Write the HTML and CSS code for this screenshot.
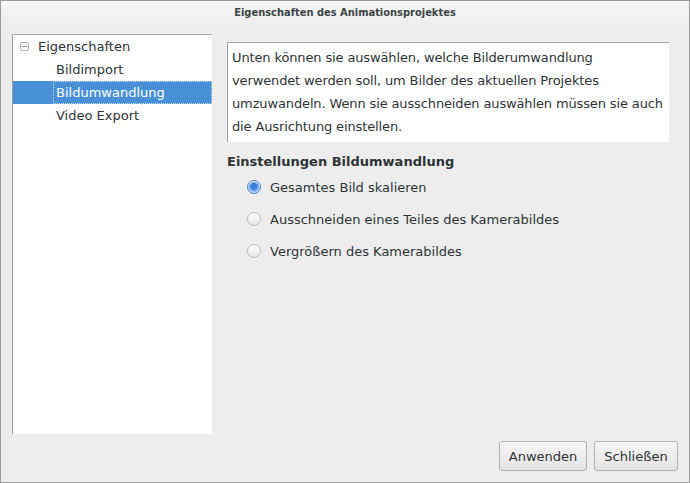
FILE: index.html
```html
<!DOCTYPE html>
<html>
<head>
<meta charset="utf-8">
<link rel="stylesheet" href="styles.css">
</head>
<body>
<div class="window">
  <div class="titlebar">Eigenschaften des Animationsprojektes</div>
  <div class="content">
    <div class="tree">
      <div class="row parent"><span class="expander"></span><span class="label">Eigenschaften</span></div>
      <div class="row child"><span class="label">Bildimport</span></div>
      <div class="row child selected"><span class="label focus">Bildumwandlung</span></div>
      <div class="row child"><span class="label">Video Export</span></div>
    </div>
    <div class="panel">
      <div class="info">Unten können sie auswählen, welche Bilderumwandlung<br>verwendet werden soll, um Bilder des aktuellen Projektes<br>umzuwandeln. Wenn sie ausschneiden auswählen müssen sie auch<br>die Ausrichtung einstellen.</div>
      <div class="heading">Einstellungen Bildumwandlung</div>
      <div class="options">
        <div class="option"><span class="radio checked"></span><span>Gesamtes Bild skalieren</span></div>
        <div class="option"><span class="radio"></span><span>Ausschneiden eines Teiles des Kamerabildes</span></div>
        <div class="option"><span class="radio"></span><span>Vergrößern des Kamerabildes</span></div>
      </div>
    </div>
  </div>
  <div class="footer">
    <button class="btn">Anwenden</button>
    <button class="btn">Schließen</button>
  </div>
</div>
</body>
</html>
```
FILE: styles.css
```css
html, body {
  margin: 0;
  padding: 0;
  background: #ededed;
}
.window {
  width: 690px;
  height: 483px;
  box-sizing: border-box;
  border: 1px solid #9c9c9c;
  display: flex;
  flex-direction: column;
  background: #ededed;
  font-family: "DejaVu Sans", sans-serif;
  font-size: 13px;
  color: #2e3436;
}
.titlebar {
  height: 24px;
  line-height: 23px;
  text-align: center;
  font-family: "DejaVu Sans Condensed", "DejaVu Sans", sans-serif;
  font-weight: bold;
  font-size: 11px;
  color: #3c4446;
  background: linear-gradient(#f7f7f7, #ededed);
}
.content {
  flex: 1;
  display: flex;
  padding: 9px 20px 0 11px;
  min-height: 0;
}
.tree {
  width: 199px;
  flex-shrink: 0;
  height: 399px;
  background: #fff;
  border-top: 1px solid #a8a8a8;
  border-left: 1px solid #9a9a9a;
  display: flex;
  flex-direction: column;
}
.row {
  height: 23px;
  display: flex;
  align-items: center;
}
.row.parent {
  padding-left: 7px;
}
.expander {
  width: 7px;
  height: 7px;
  border: 1px solid #b0b0b0;
  border-radius: 2px;
  position: relative;
  margin-right: 6px;
}
.expander::after {
  content: "";
  position: absolute;
  left: 1px;
  right: 1px;
  top: 3px;
  height: 1px;
  background: #8a8a8a;
}
.row.child {
  padding-left: 40px;
}
.row .label {
  flex: 1;
  height: 100%;
  display: flex;
  align-items: center;
  padding-left: 3px;
  box-sizing: border-box;
}
.row.selected {
  background: #4a90d9;
  color: #fff;
}
.focus {
  outline: 1px dotted #c8dcf2;
  outline-offset: -1px;
}
.panel {
  flex: 1;
  min-width: 0;
  display: flex;
  flex-direction: column;
  padding-left: 15px;
  padding-top: 8px;
}
.info {
  height: 100px;
  box-sizing: border-box;
  background: #fff;
  border-top: 1px solid #a8a8a8;
  border-left: 1px solid #9a9a9a;
  padding: 3px 0 0 4px;
  line-height: 23px;
  letter-spacing: -0.13px;
  white-space: nowrap;
  overflow: hidden;
}
.heading {
  font-weight: bold;
  margin-top: 11px;
  line-height: 18px;
}
.options {
  display: flex;
  flex-direction: column;
  padding-left: 20px;
  margin-top: 0;
}
.option {
  height: 32px;
  display: flex;
  align-items: center;
}
.radio {
  width: 12px;
  height: 12px;
  border-radius: 50%;
  border: 1px solid #bdbdbd;
  background: linear-gradient(#ffffff, #e6e6e6);
  margin-right: 9px;
  box-shadow: inset 0 1px 0 #fff;
}
.radio.checked {
  border-color: #4d7fbf;
  background: radial-gradient(circle at 50% 45%, #2f78d6 0, #3d86de 3px, #8dbaf0 5px, #c9ddf5 6px);
}
.footer {
  display: flex;
  justify-content: flex-end;
  gap: 7px;
  padding: 7px 11px 11px 0;
}
.btn {
  height: 30px;
  box-sizing: border-box;
  border: 1px solid #b3b3b3;
  border-radius: 3px;
  background: linear-gradient(#f6f6f6, #e3e3e3);
  font-family: "DejaVu Sans", sans-serif;
  font-size: 13px;
  color: #2e3436;
  padding: 0 8px;
  margin: 0;
}
.btn:first-child {
  width: 88px;
}
.btn:last-child {
  width: 84px;
}
```
